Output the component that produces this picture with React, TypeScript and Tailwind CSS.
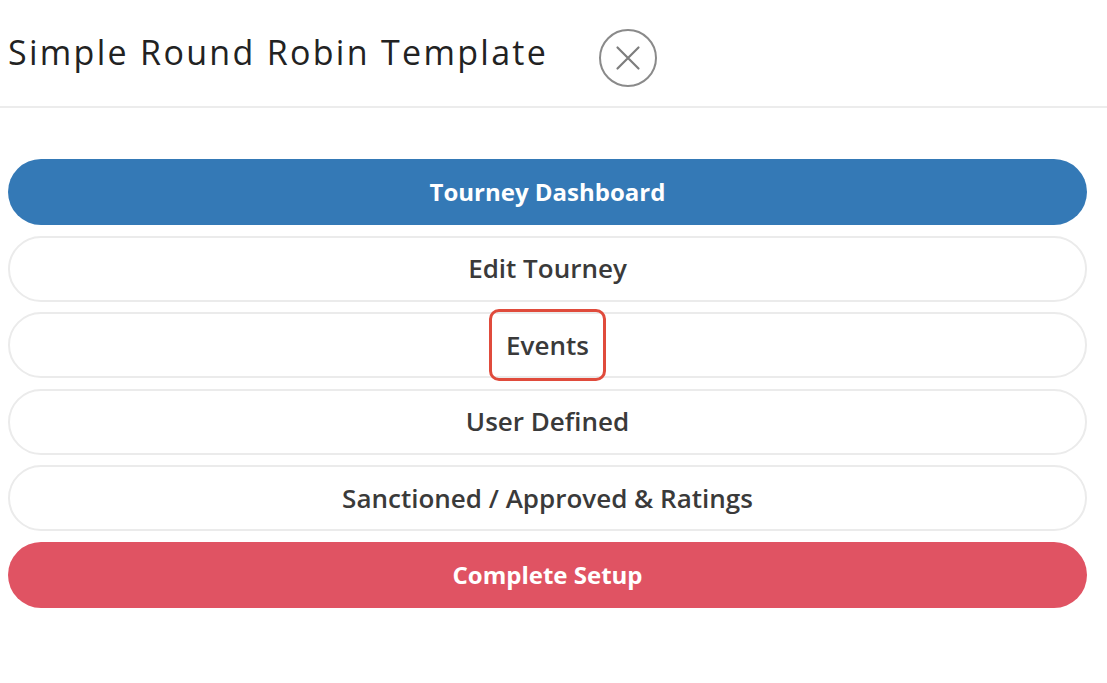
const items = [
  { label: "Tourney Dashboard", kind: "primary" },
  { label: "Edit Tourney", kind: "plain" },
  { label: "Events", kind: "highlight" },
  { label: "User Defined", kind: "plain" },
  { label: "Sanctioned / Approved & Ratings", kind: "plain" },
  { label: "Complete Setup", kind: "danger" },
];

const CloseIcon = () => (
  <svg width="60" height="60" viewBox="0 0 60 60" fill="none">
    <circle cx="30" cy="30" r="28" stroke="#8a8a8a" strokeWidth="2" />
    <path d="M19.5 19.5 L40.5 40.5 M40.5 19.5 L19.5 40.5" stroke="#7d7d7d" strokeWidth="2.2" strokeLinecap="round" />
  </svg>
);

export default function App() {
  return (
    <div className="w-[1107px] h-[683px] bg-white overflow-hidden font-['Open_Sans','Noto_Sans',sans-serif]">
      <header className="flex items-center h-[108px] pl-[8px] border-b-2 border-[#ececec]">
        <h1 className="text-[34px] leading-none tracking-[2.3px] text-[#222] -mt-[2px]">Simple Round Robin Template</h1>
        <button className="ml-[50px] mt-[10px]">
          <CloseIcon />
        </button>
      </header>

      <div className="flex flex-col gap-[10.6px] pl-[8px] pr-[20px] pt-[51px]">
        {items.map((it) => {
          if (it.kind === "primary")
            return (
              <div key={it.label} className="h-[66px] rounded-full bg-[#3479b6] flex items-center justify-center text-white text-[24px] font-bold">
                {it.label}
              </div>
            );
          if (it.kind === "danger")
            return (
              <div key={it.label} className="h-[66px] rounded-full bg-[#e05363] flex items-center justify-center text-white text-[24px] font-bold">
                {it.label}
              </div>
            );
          return (
            <div key={it.label} className="h-[66px] rounded-full border-2 border-[#ebebeb] bg-white flex items-center justify-center text-[#3a3a3a] text-[26px] font-semibold">
              {it.kind === "highlight" ? (
                <span className="border-[3px] border-[#e04b3c] rounded-[10px] px-[14px] py-[20px] leading-none">{it.label}</span>
              ) : (
                it.label
              )}
            </div>
          );
        })}
      </div>
    </div>
  );
}
